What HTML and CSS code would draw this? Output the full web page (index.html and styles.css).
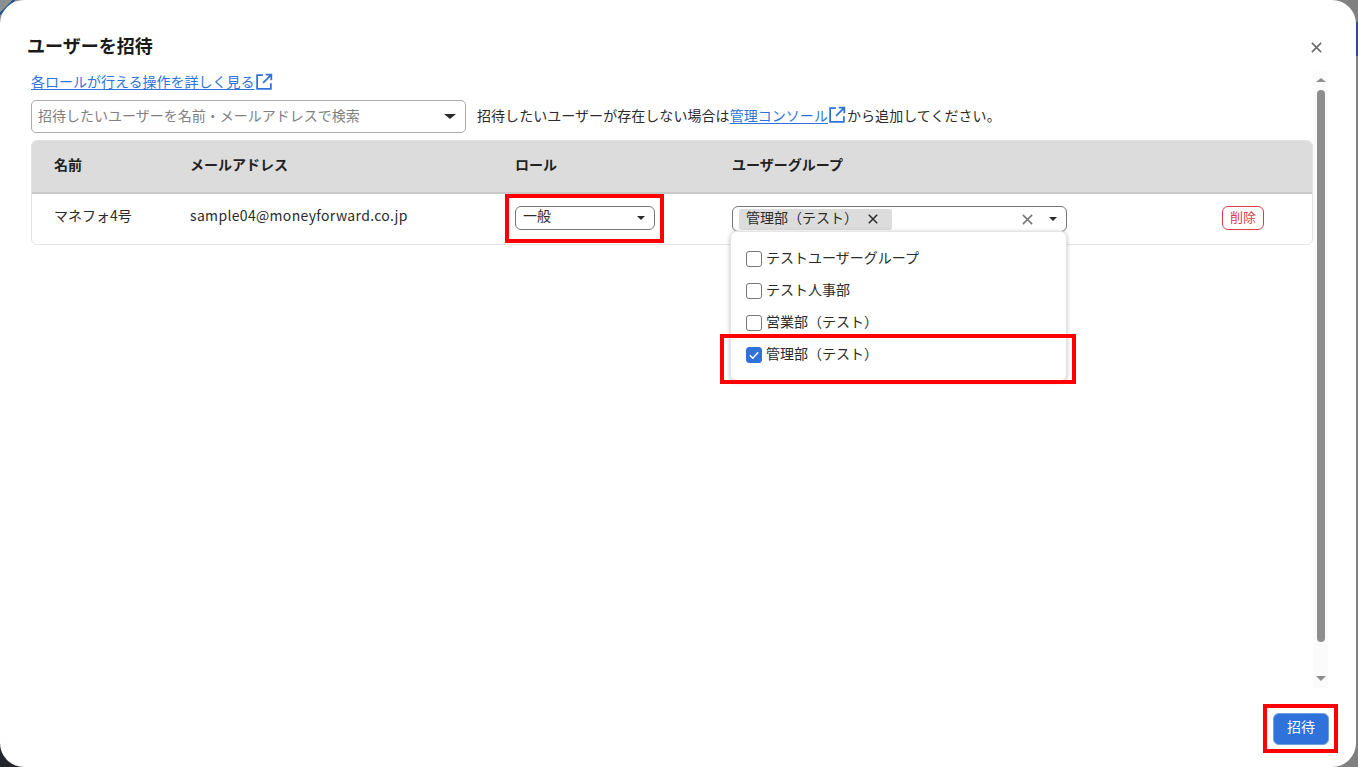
FILE: index.html
```html
<!DOCTYPE html>
<html lang="ja">
<head>
<meta charset="utf-8">
<title>ユーザーを招待</title>
<link rel="stylesheet" href="styles.css">
</head>
<body>
<div class="modal">
  <header class="modal-head">
    <h1 class="title">ユーザーを招待</h1>
    <svg class="close" viewBox="0 0 10 10"><path d="M.8.8l8.4 8.4M9.2.8L.8 9.2"/></svg>
  </header>
  <div class="modal-mid">
    <div class="content">
      <div class="role-link-row">
        <a class="link">各ロールが行える操作を詳しく見る</a>
        <svg class="ext ext-top" viewBox="0 0 16 16"><path d="M7 1.9H1.9v12.2h12.2V9M9.5 1.5h5v5M14.3 1.7L7.2 8.8"/></svg>
      </div>
      <div class="search-row">
        <div class="search">
          <span class="placeholder">招待したいユーザーを名前・メールアドレスで検索</span>
          <span class="caret caret-big"></span>
        </div>
        <p class="hint">招待したいユーザーが存在しない場合は<a class="link">管理コンソール</a><svg class="ext ext-inline" viewBox="0 0 16 16"><path d="M7 1.9H1.9v12.2h12.2V9M9.5 1.5h5v5M14.3 1.7L7.2 8.8"/></svg>から追加してください。</p>
      </div>
      <div class="table">
        <div class="row row-head">
          <div class="cell c-name">名前</div>
          <div class="cell c-mail">メールアドレス</div>
          <div class="cell c-role">ロール</div>
          <div class="cell c-group">ユーザーグループ</div>
        </div>
        <div class="row row-body">
          <div class="cell c-name">マネフォ4号</div>
          <div class="cell c-mail">sample04@moneyforward.co.jp</div>
          <div class="cell c-role">
            <div class="role-select"><span>一般</span><span class="caret"></span></div>
          </div>
          <div class="cell c-group">
            <div class="group-select">
              <span class="chip">管理部（テスト）<svg class="chip-x" viewBox="0 0 10 10"><path d="M.8.8l8.4 8.4M9.2.8L.8 9.2"/></svg></span>
              <span class="group-controls">
                <svg class="clear-x" viewBox="0 0 10 10"><path d="M.8.8l8.4 8.4M9.2.8L.8 9.2"/></svg>
                <span class="caret"></span>
              </span>
            </div>
          </div>
          <div class="cell c-del"><button class="del">削除</button></div>
        </div>
        <ul class="menu">
          <li class="opt"><span class="box"></span>テストユーザーグループ</li>
          <li class="opt"><span class="box"></span>テスト人事部</li>
          <li class="opt"><span class="box"></span>営業部（テスト）</li>
          <li class="opt"><span class="box box-on"><svg viewBox="0 0 16 16"><path d="M3.8 8.2l3 3 5.4-6"/></svg></span>管理部（テスト）</li>
        </ul>
      </div>
    </div>
    <div class="scrollbar">
      <span class="arrow arrow-up"></span>
      <span class="thumb"></span>
      <span class="arrow arrow-down"></span>
    </div>
  </div>
  <footer class="modal-foot"><button class="invite">招待</button></footer>
</div>
<span class="mark mark-role"></span>
<span class="mark mark-opt"></span>
<span class="mark mark-btn"></span>
</body>
</html>
```
FILE: styles.css
```css
* { box-sizing: border-box; }
html, body { height: 100%; }
body {
  margin: 0;
  width: 1358px;
  height: 767px;
  overflow: hidden;
  background:
    linear-gradient(#2c4f86, #2c4f86) right 22px / 2px 34px no-repeat,
    linear-gradient(#23262b, #23262b) left bottom / 24px 24px no-repeat,
    linear-gradient(135deg, #8a8f94 0 9px, #24598f 9px 11px, #8a8f94 11px) left top / 24px 24px no-repeat,
    #808080;
  color: #2b2b2b;
  font-family: "Noto Sans CJK JP", "Noto Sans", sans-serif;
  font-size: 14px;
  position: relative;
}
.modal {
  width: 1356px;
  height: 767px;
  background: #fff;
  border-radius: 24px;
  display: flex;
  flex-direction: column;
  padding: 0 0 0 31px;
}
.modal-head {
  height: 71px;
  display: flex;
  align-items: flex-start;
  justify-content: space-between;
  padding: 32px 34px 0 0;
}
.title {
  margin: 0 0 0 -4px;
  font-size: 18px;
  line-height: 26px;
  font-weight: 700;
  color: #1a1a1a;
}
.close {
  width: 11px;
  height: 11px;
  margin: 10px 0 0 0;
  fill: none;
  stroke: #666;
  stroke-width: 1.3;
}
.modal-mid {
  height: 617px;
  display: flex;
  align-items: stretch;
  justify-content: space-between;
  padding-right: 28px;
}
.content { width: 1283px; padding-top: 2px; position: relative; }
.role-link-row {
  height: 20px;
  display: flex;
  align-items: center;
  line-height: 18px;
}
.role-link-row .link { margin-bottom: 5px; }
.link { color: #2f73da; text-decoration: underline; text-underline-offset: 2px; }
.ext {
  width: 18px;
  height: 18px;
  fill: none;
  stroke: #2f73da;
  stroke-width: 1.6;
  flex: none;
  vertical-align: -3px;
}
.ext-top { margin-bottom: 2px; }
.ext-inline { margin-right: 1px; }
.search-row {
  margin-top: 7px;
  display: flex;
  align-items: center;
  gap: 11px;
}
.search {
  width: 435px;
  height: 33px;
  border: 1px solid #acacac;
  border-radius: 5px;
  display: flex;
  align-items: center;
  justify-content: space-between;
  padding: 0 9px 0 6px;
}
.placeholder { color: #808080; margin-bottom: 4px; }
.hint { margin: 0 0 4px; font-size: 14px; letter-spacing: .05px; color: #2b2b2b; }
.caret {
  width: 0;
  height: 0;
  border-left: 4.5px solid transparent;
  border-right: 4.5px solid transparent;
  border-top: 4.5px solid #2b2b2b;
  flex: none;
}
.caret-big { border-left-width: 6px; border-right-width: 6px; border-top-width: 5px; }
.table {
  margin-top: 7px;
  position: relative;
  border: 1px solid #e2e2e2;
  border-radius: 6px;
  height: 105px;
}
.row { display: flex; align-items: center; }
.row-head {
  height: 53px;
  padding-bottom: 6px;
  background: #dcdcdc;
  border-bottom: 2px solid #c9c9c9;
  border-radius: 5px 5px 0 0;
  font-weight: 700;
  color: #222;
}
.row-body { height: 50px; }
.cell { flex: none; }
.c-name { width: 158px; padding-left: 22px; }
.c-mail { width: 325px; }
.c-role { width: 217px; }
.c-group { width: 490px; }
.row-body .c-name, .row-body .c-mail { margin-top: -9px; }
.row-body .c-mail { letter-spacing: .33px; }
.c-del { width: 42px; }
.role-select {
  width: 140px;
  height: 24px;
  margin-top: -2px;
  border: 1px solid #777;
  border-radius: 6px;
  display: flex;
  align-items: center;
  justify-content: space-between;
  padding: 0 9px 0 7px;
}
.role-select span:first-child { margin-bottom: 6px; }
.group-select {
  width: 335px;
  height: 26px;
  border: 1px solid #777;
  border-radius: 6px;
  display: flex;
  align-items: center;
  justify-content: space-between;
  padding: 0 9px 0 6px;
}
.chip {
  height: 21px;
  width: 153px;
  padding-bottom: 5px;
  background: #dcdcdc;
  border-radius: 3px;
  display: flex;
  align-items: center;
  padding-left: 7px;
  white-space: nowrap;
}
.chip-x {
  width: 10px;
  height: 10px;
  margin: 5px 0 0 10px;
  fill: none;
  stroke: #2b2b2b;
  stroke-width: 1.5;
  flex: none;
}
.group-controls { display: flex; align-items: center; gap: 16px; }
.clear-x {
  width: 11px;
  height: 11px;
  fill: none;
  stroke: #777;
  stroke-width: 1.4;
}
.del {
  display: block;
  width: 42px;
  height: 24px;
  margin-top: -2px;
  padding: 0 0 6px;
  background: #fff;
  border: 1px solid #dc3c46;
  border-radius: 6px;
  color: #dc3c46;
  font: inherit;
  font-size: 13px;
}
.menu {
  position: absolute;
  left: 698px;
  top: 90px;
  width: 337px;
  height: 150px;
  margin: 0;
  padding: 10px 0 0 15px;
  list-style: none;
  background: #fff;
  border: 1px solid #e4e4e4;
  border-radius: 6px;
  box-shadow: 0 1px 4px rgba(0,0,0,.25);
}
.opt { height: 32px; padding-bottom: 2px; display: flex; align-items: center; gap: 4px; }
.box {
  width: 16px;
  height: 16px;
  border: 1.5px solid #777;
  border-radius: 3px;
  flex: none;
  margin-top: 4px;
}
.box-on { background: #2f73da; border-color: #2f73da; }
.box-on svg { display: block; width: 16px; height: 16px; margin: -1.5px; fill: none; stroke: #fff; stroke-width: 1.5; }
.scrollbar {
  width: 15px;
  height: 617px;
  background: #fbfbfb;
  display: flex;
  flex-direction: column;
  align-items: center;
  padding: 7px 0 0 1px;
}
.arrow { width: 0; height: 0; border-left: 5px solid transparent; border-right: 5px solid transparent; flex: none; }
.arrow-up { border-bottom: 4px solid #8e8e8e; }
.arrow-down { border-top: 5px solid #8e8e8e; }
.thumb { width: 8px; height: 552px; margin: 8px 0 34px; background: #8e8e8e; border-radius: 4px; flex: none; }
.modal-foot {
  flex: 1;
  display: flex;
  justify-content: flex-end;
  padding: 25px 27px 0 0;
}
.invite {
  width: 56px;
  height: 32px;
  padding: 0 0 6px;
  background: #2f73da;
  border: 1px solid #6f9fe6;
  border-radius: 6px;
  color: #fff;
  font: inherit;
  font-size: 14px;
}
.mark { position: absolute; border: 4px solid #ff0000; pointer-events: none; }
.mark-role { left: 505px; top: 194px; width: 159px; height: 49px; }
.mark-opt { left: 720px; top: 334px; width: 356px; height: 50px; }
.mark-btn { left: 1263px; top: 704px; width: 75px; height: 49px; }
```
